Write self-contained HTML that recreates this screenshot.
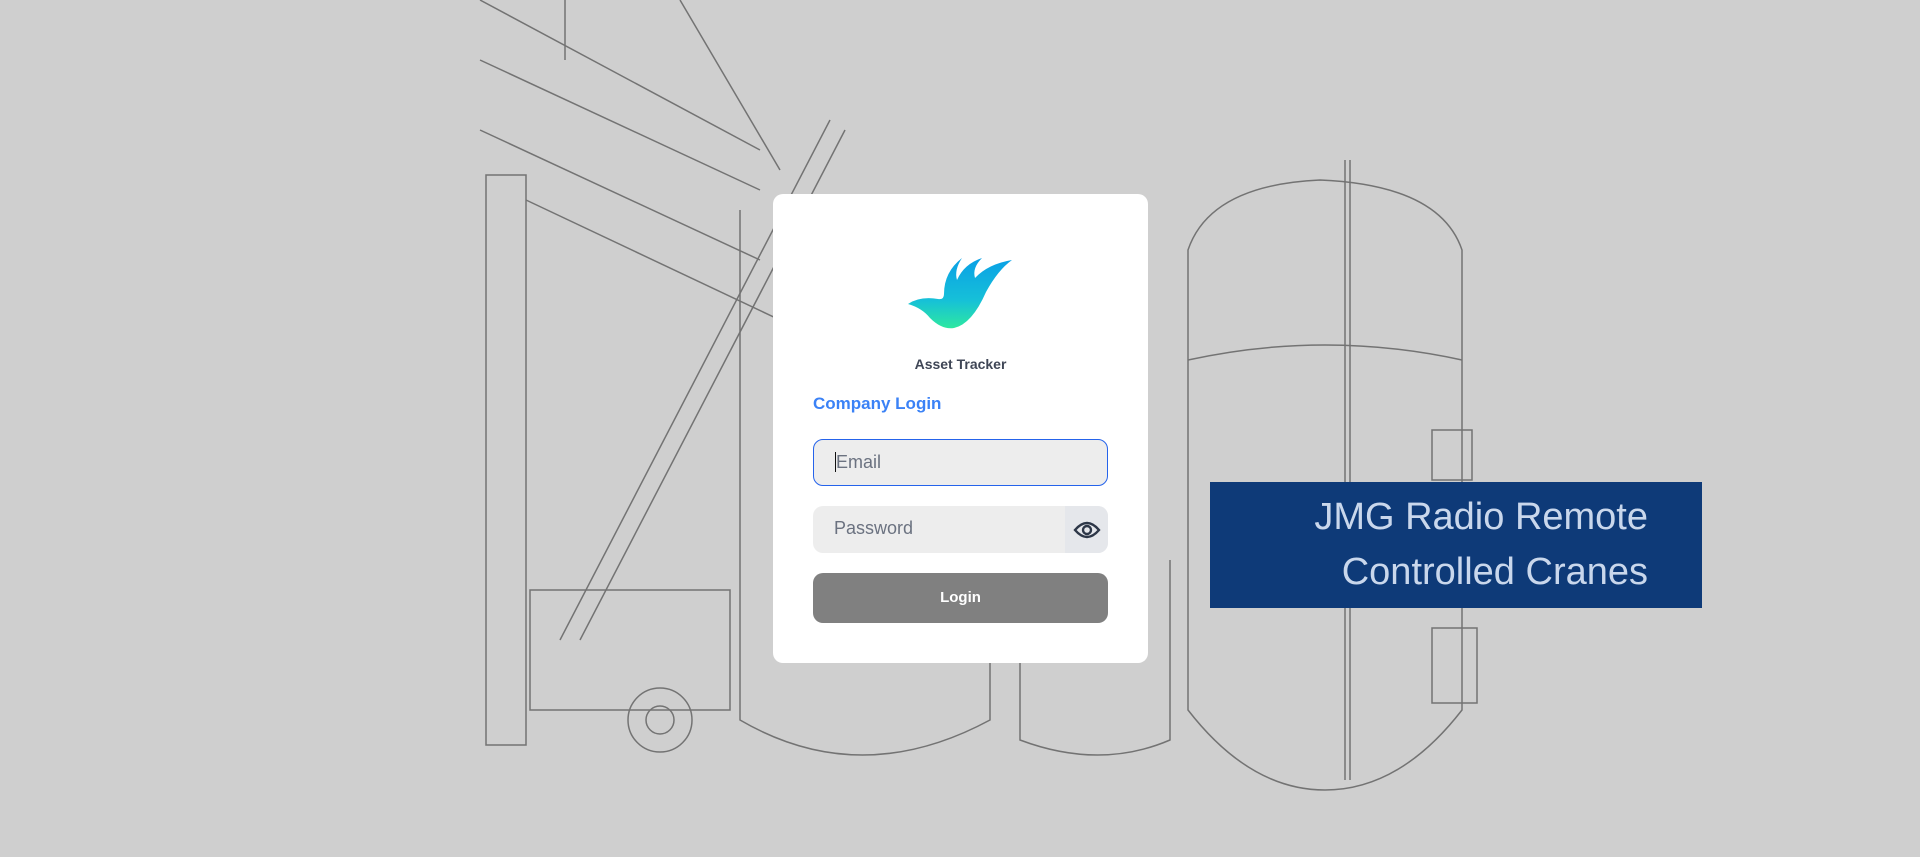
<!DOCTYPE html>
<html><head><meta charset="utf-8"><style>
html,body{margin:0;padding:0;width:1920px;height:857px;overflow:hidden;background:#cfcfcf;font-family:"Liberation Sans",sans-serif}
.bg{position:absolute;left:0;top:0}
.banner{position:absolute;left:1210px;top:482px;width:492px;height:126px;background:#0e3a78;color:#c9d7ec;font-size:38px;line-height:55px;text-align:right;box-sizing:border-box;padding:8px 54px 0 0}
.card{position:absolute;left:773px;top:194px;width:375px;height:469px;background:#fff;border-radius:10px}
.title{position:absolute;left:0;width:100%;top:162px;text-align:center;font-weight:bold;font-size:14px;color:#3f4656}
.cl{position:absolute;left:40px;top:200px;font-weight:bold;font-size:17px;color:#3b82f6}
.in{position:absolute;left:40px;width:295px;height:47px;background:#ededed;border-radius:10px;box-sizing:border-box;font-size:18px;color:#6b7280;padding-left:21px;line-height:45px}
.email{top:245px;border:1.5px solid #2563eb;color:#6b7280}
.pw{top:312px;overflow:hidden}
.eye{position:absolute;right:0;top:0;width:43px;height:47px;background:#e5e7eb;display:flex;align-items:center;justify-content:center}
.btn{position:absolute;left:40px;top:379px;width:295px;height:50px;background:#808080;border-radius:10px;color:#fff;font-weight:bold;font-size:15px;text-align:center;line-height:50px}
</style></head><body>
<svg class="bg" width="1920" height="857" fill="none" stroke="#555" stroke-width="1.5" opacity="0.75">
<line x1="480" y1="0" x2="760" y2="150"/><line x1="480" y1="60" x2="760" y2="190"/><line x1="480" y1="130" x2="760" y2="260"/>
<line x1="565" y1="0" x2="565" y2="60"/><line x1="680" y1="0" x2="780" y2="170"/>
<rect x="486" y="175" width="40" height="570"/><line x1="526" y1="200" x2="780" y2="320"/>
<line x1="560" y1="640" x2="830" y2="120"/><line x1="580" y1="640" x2="845" y2="130"/>
<rect x="530" y="590" width="200" height="120"/><circle cx="660" cy="720" r="32"/><circle cx="660" cy="720" r="14"/>
<path d="M740 210 L740 720 Q860 790 990 720 L990 210"/>
<path d="M1020 560 L1020 740 Q1100 770 1170 740 L1170 560"/>
<path d="M1188 250 Q1210 185 1320 180 Q1440 185 1462 250 L1462 710 Q1400 790 1325 790 Q1250 790 1188 710 Z"/>
<line x1="1350" y1="160" x2="1350" y2="780"/><line x1="1345" y1="160" x2="1345" y2="780"/>
<path d="M1188 360 Q1325 330 1462 360"/><rect x="1432" y="430" width="40" height="50"/><rect x="1432" y="628" width="45" height="75"/>
</svg>
<div class="banner">JMG Radio Remote<br>Controlled Cranes</div>
<div class="card">
<svg style="position:absolute;left:135px;top:64px" width="104" height="72" viewBox="0 0 104 72">
<defs><linearGradient id="g" x1="0" y1="0" x2="0" y2="1"><stop offset="0" stop-color="#0aa0e6"/><stop offset="0.6" stop-color="#16c0d8"/><stop offset="1" stop-color="#2de8a0"/></linearGradient></defs>
<path fill="url(#g)" d="M0 46 Q12 38 30 41 Q36 42 36 36 Q36 14 54 0 Q46 12 49 22 Q56 6 74 0 Q64 10 67 20 Q80 6 104 2 Q90 12 78 34 Q64 66 46 70 Q34 72 22 60 Q14 50 0 46 Z"/>
</svg>
<div class="title">Asset Tracker</div>
<div class="cl">Company Login</div>
<div class="in email"><span style="border-left:1.5px solid #111;"></span>Email</div>
<div class="in pw">Password<div class="eye"><svg width="28" height="20" viewBox="0 0 28 20" fill="none" stroke="#2d3748" stroke-width="2.4"><path d="M2 10 Q14 -4 26 10 Q14 24 2 10 Z"/><circle cx="14" cy="10" r="4"/></svg></div></div>
<div class="btn">Login</div>
</div>
</body></html>
